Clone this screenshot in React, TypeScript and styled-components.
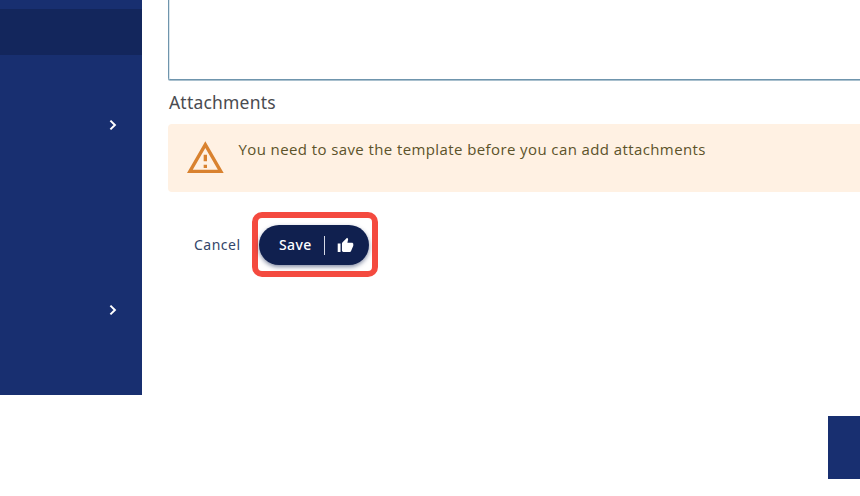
import { ReactElement } from 'react'
import styled, { createGlobalStyle } from 'styled-components'

const GlobalStyle = createGlobalStyle`
  * {
    box-sizing: border-box;
  }

  body {
    margin: 0;
    background: #fff;
    font-family: 'Noto Sans', 'Open Sans', sans-serif;
    overflow: hidden;
  }

  button {
    padding: 0;
    border: 0;
    font-family: inherit;
    cursor: pointer;
  }
`

const Page = styled.div`
  display: flex;
  flex-direction: column;
  width: 860px;
  height: 496px;
  overflow: hidden;
`

const Body = styled.div`
  display: flex;
  height: 394.5px;
`

const Sidebar = styled.nav`
  width: 142.4px;
  height: 100%;
  padding-top: 9px;
  background: #182f70;
`

const SidebarItem = styled.div<{ $active?: boolean }>`
  display: flex;
  align-items: center;
  justify-content: flex-end;
  height: 46.25px;
  padding-right: 22px;
  background: ${({ $active }) => ($active ? '#13265c' : 'transparent')};
`

const Main = styled.main`
  flex: 1;
  min-width: 0;
  padding-left: 25.6px;
`

const Editor = styled.div`
  height: 80px;
  border: 1px solid #6f95ad;
  border-width: 0 0 1px 1px;
  border-bottom-left-radius: 2px;
  box-shadow: 0 1px 0 #a9c0ce, inset 1px 0 0 #dbe6ec;
`

const Heading = styled.h2`
  height: 44px;
  margin: 0;
  padding-left: 1px;
  color: #4a4b50;
  font-size: 17.5px;
  font-weight: 400;
  letter-spacing: 0.2px;
  line-height: 44px;
`

const Alert = styled.div`
  display: flex;
  height: 68px;
  padding: 14px 0 0 17px;
  border-radius: 4px 0 0 4px;
  background: #fff1e3;
`

const AlertText = styled.p`
  margin: -1px 0 0 13.5px;
  color: #5c532a;
  font-family: 'Open Sans', sans-serif;
  font-size: 15px;
  letter-spacing: 0.4px;
  line-height: 24px;
  white-space: nowrap;
`

const Actions = styled.div`
  display: flex;
  align-items: center;
  padding: 20px 0 0 26px;
`

const CancelButton = styled.button`
  width: 46px;
  margin-top: -1px;
  background: none;
  color: #33466a;
  font-size: 14px;
  letter-spacing: 0.5px;
  white-space: nowrap;
`

const Highlight = styled.div`
  width: 126px;
  height: 65px;
  margin-left: 12px;
  padding: 7px 0 0 1px;
  border: 6px solid #f44a3f;
  border-radius: 10px;
`

const SaveButton = styled.button`
  display: flex;
  align-items: center;
  width: 110px;
  height: 40px;
  padding-left: 20px;
  border-radius: 20px;
  background: #10204f;
  box-shadow: 0 2px 4px rgba(16, 32, 79, 0.5);
  color: #fff;
  font-size: 14px;
  font-weight: 500;
  letter-spacing: 0.4px;
`

const SaveLabel = styled.span`
  width: 45px;
  margin-top: -1px;
  text-align: left;
`

const Divider = styled.span`
  width: 1px;
  height: 19px;
  margin-right: 12px;
  background: #d5d9e6;
`

const Footer = styled.footer`
  display: flex;
  justify-content: flex-end;
  padding-top: 21px;
`

const FooterBlock = styled.div`
  width: 32px;
  height: 63.5px;
  background: #182f70;
`

const ChevronIcon = (): ReactElement => (
  <svg width="14" height="14" viewBox="0 0 14 14" fill="none">
    <path d="M4.4 2.6 8.9 7 4.4 11.4" stroke="#fff" strokeWidth="2" />
  </svg>
)

const WarningIcon = (): ReactElement => (
  <svg width="40" height="40" viewBox="0 0 24 24" fill="#d9822f">
    <path d="M12.2 5.99 19.73 19H4.67L12.2 5.99M12.2 2 1.2 21h22L12.2 2zm1 14h-2v2h2v-2zm0-6h-2v4h2v-4z" />
  </svg>
)

const ThumbUpIcon = (): ReactElement => (
  <svg width="17" height="17" viewBox="0 0 24 24" fill="#fff">
    <path d="M1 21h4V9H1v12zm22-11c0-1.1-.9-2-2-2h-6.31l.95-4.57.03-.32c0-.41-.17-.79-.44-1.06L14.17 1 7.59 7.59C7.22 7.95 7 8.45 7 9v10c0 1.1.9 2 2 2h9c.83 0 1.54-.5 1.84-1.22l3.02-7.05c.09-.23.14-.47.14-.73v-2z" />
  </svg>
)

const sidebarItems = [
  { id: 1, active: true },
  { id: 2 },
  { id: 3, expandable: true },
  { id: 4 },
  { id: 5 },
  { id: 6 },
  { id: 7, expandable: true },
]

const App = (): ReactElement => (
  <Page>
    <GlobalStyle />

    <Body>
      <Sidebar>
        {sidebarItems.map(item => (
          <SidebarItem key={item.id} $active={item.active}>
            {item.expandable && <ChevronIcon />}
          </SidebarItem>
        ))}
      </Sidebar>

      <Main>
        <Editor />

        <Heading>Attachments</Heading>

        <Alert>
          <WarningIcon />
          <AlertText>
            You need to save the template before you can add attachments
          </AlertText>
        </Alert>

        <Actions>
          <CancelButton type="button">Cancel</CancelButton>

          <Highlight>
            <SaveButton type="button">
              <SaveLabel>Save</SaveLabel>
              <Divider />
              <ThumbUpIcon />
            </SaveButton>
          </Highlight>
        </Actions>
      </Main>
    </Body>

    <Footer>
      <FooterBlock />
    </Footer>
  </Page>
)

export default App
